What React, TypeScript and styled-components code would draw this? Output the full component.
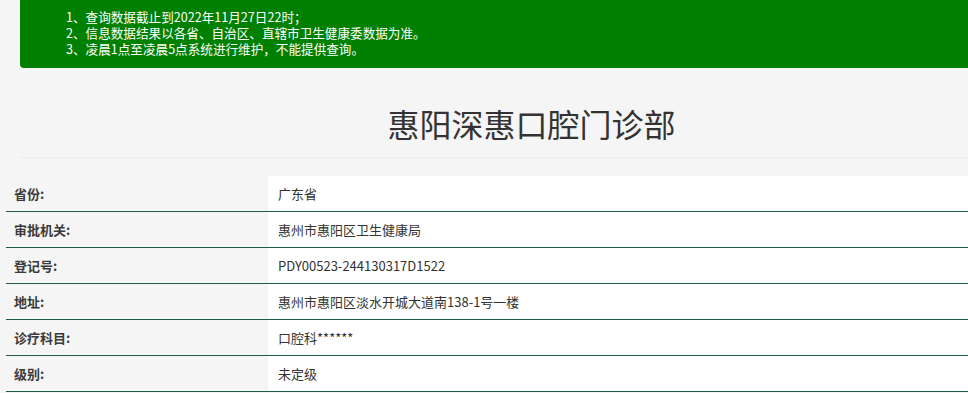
import React from "react";
import styled, { createGlobalStyle } from "styled-components";

const Global = createGlobalStyle`
  html, body {
    margin: 0;
    padding: 0;
    background: #f5f5f5;
    overflow: hidden;
  }
  body {
    font-family: "Noto Sans CJK SC", "Noto Sans", sans-serif;
    color: #333;
  }
`;

const Page = styled.div`
  width: 1060px;
  display: flex;
  flex-direction: column;
`;

const Notice = styled.ul`
  margin: 0 0 0 20px;
  padding: 9px 0 11px 46px;
  list-style: none;
  background: #008000;
  border-radius: 0 0 4px 4px;
  color: #fff;
  font-size: 12.6px;
  line-height: 16px;
`;

const NoticeItem = styled.li`
  margin: 0;
  height: 16px;
  white-space: nowrap;
`;

const Title = styled.h1`
  margin: 35px 0 0 20px;
  width: 1023px;
  padding-bottom: 14px;
  border-bottom: 1px solid #ebebeb;
  text-align: center;
  font-size: 32px;
  line-height: 40px;
  font-weight: 400;
  color: #333;
`;

const Table = styled.div`
  margin: 18px 0 0 6px;
  display: flex;
  flex-direction: column;
`;

const Row = styled.div`
  display: grid;
  grid-template-columns: 262px 1fr;
  height: 35px;
  border-bottom: 1px solid #1f5a48;
`;

const Label = styled.div`
  display: flex;
  align-items: center;
  padding-left: 8px;
  font-size: 13px;
  font-weight: 700;
  color: #3a3a3a;
  background: #f5f5f5;
`;

const Value = styled.div`
  display: flex;
  align-items: center;
  padding-left: 10px;
  font-size: 13px;
  color: #333;
  background: #fefffe;
`;

const notices = [
  "1、查询数据截止到2022年11月27日22时；",
  "2、信息数据结果以各省、自治区、直辖市卫生健康委数据为准。",
  "3、凌晨1点至凌晨5点系统进行维护，不能提供查询。",
];

const rows: [string, string][] = [
  ["省份:", "广东省"],
  ["审批机关:", "惠州市惠阳区卫生健康局"],
  ["登记号:", "PDY00523-244130317D1522"],
  ["地址:", "惠州市惠阳区淡水开城大道南138-1号一楼"],
  ["诊疗科目:", "口腔科******"],
  ["级别:", "未定级"],
];

export default function App() {
  return (
    <>
      <Global />
      <Page>
        <Notice>
          {notices.map((n) => (
            <NoticeItem key={n}>{n}</NoticeItem>
          ))}
        </Notice>
        <Title>惠阳深惠口腔门诊部</Title>
        <Table>
          {rows.map(([k, v]) => (
            <Row key={k}>
              <Label>{k}</Label>
              <Value>{v}</Value>
            </Row>
          ))}
        </Table>
      </Page>
    </>
  );
}
